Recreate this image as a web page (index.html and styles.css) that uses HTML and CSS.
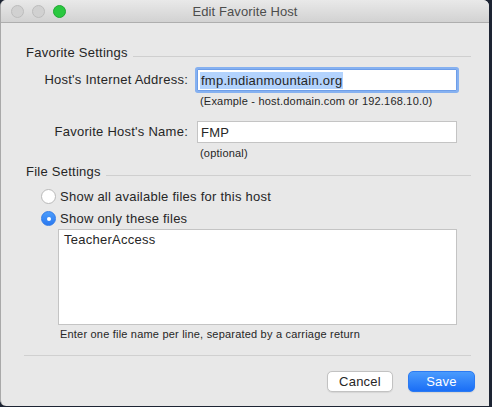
FILE: index.html
```html
<!DOCTYPE html>
<html>
<head>
<meta charset="utf-8">
<link rel="stylesheet" href="styles.css">
</head>
<body>
<div class="window">
  <div class="titlebar">
    <div class="lights">
      <span class="light"></span>
      <span class="light"></span>
      <span class="light green"></span>
    </div>
    <div class="title">Edit Favorite Host</div>
  </div>
  <div class="content">
    <div class="section-head"><span>Favorite Settings</span><i class="rule"></i></div>
    <div class="form">
      <label class="label row1">Host's Internet Address:</label>
      <div class="field focused row1"><span class="sel">fmp.indianmountain.org</span></div>
      <div class="hint hint1">(Example - host.domain.com or 192.168.10.0)</div>
      <label class="label row2">Favorite Host's Name:</label>
      <div class="field row2">FMP</div>
      <div class="hint hint2">(optional)</div>
    </div>
    <div class="section-head fs"><span>File Settings</span><i class="rule"></i></div>
    <div class="radio r1"><span class="dot"></span>Show all available files for this host</div>
    <div class="radio r2"><span class="dot on"></span>Show only these files</div>
    <div class="textarea">TeacherAccess</div>
    <div class="hint hint3">Enter one file name per line, separated by a carriage return</div>
    <div class="sep"></div>
    <div class="buttons">
      <button class="btn">Cancel</button>
      <button class="btn primary">Save</button>
    </div>
  </div>
</div>
</body>
</html>
```

FILE: styles.css
```css
html, body {
  margin: 0;
  padding: 0;
}
body {
  width: 492px;
  height: 407px;
  background: #1d2433;
  font-family: "Liberation Sans", Arial, sans-serif;
  overflow: hidden;
}
.window {
  width: 488px;
  height: 406px;
  background: #e8e8e8;
  border-left: 1px solid #a9a9a9;
  border-radius: 6px 6px 0 6px;
  overflow: hidden;
  color: #262626;
  letter-spacing: 0.25px;
}
.titlebar {
  height: 22px;
  border-bottom: 1px solid #aeaeae;
  background: linear-gradient(#e9e9e9, #d2d2d2);
  display: flex;
  align-items: center;
  position: relative;
}
.lights {
  display: flex;
  gap: 8px;
  padding-left: 10px;
}
.light {
  width: 11px;
  height: 11px;
  border-radius: 50%;
  background: #d1d1d1;
  border: 0.5px solid #bcbcbc;
}
.light.green {
  background: #2ac840;
  border-color: #20a833;
}
.title {
  position: absolute;
  left: 0;
  right: 0;
  top: 0;
  height: 22px;
  line-height: 24px;
  text-align: center;
  font-size: 13px;
  color: #4d4d4d;
  letter-spacing: 0.1px;
}
.content {
  padding: 22px 14px 0 25px;
}
.section-head {
  display: flex;
  align-items: center;
  height: 16px;
  line-height: 16px;
  font-size: 13px;
  color: #262626;
  margin-right: 4px;
}
.section-head .rule {
  flex: 1;
  height: 1px;
  background: #cfcfcf;
  margin-left: 5px;
  margin-top: 7px;
}
.form {
  display: grid;
  grid-template-columns: 162px 259px;
  column-gap: 9px;
  margin-top: 8px;
}
.label {
  grid-column: 1;
  text-align: right;
  font-size: 13px;
  line-height: 22px;
}
.field {
  grid-column: 2;
  height: 20px;
  background: #fff;
  border: 1px solid #c4c4c4;
  font-size: 13px;
  line-height: 21px;
  padding-left: 3px;
  box-sizing: content-box;
  width: 255px;
}
.field.focused {
  border-color: #6e9ee9;
  box-shadow: 0 0 0 2px #86b1f0;
  border-radius: 1px;
  padding-left: 2px;
  width: 256px;
}
.sel {
  background: #b3d3fd;
  display: inline-block;
  line-height: 17px;
  padding: 0 1px;
}
.hint {
  font-size: 11px;
  line-height: 13px;
  color: #262626;
  letter-spacing: 0.2px;
}
.hint1, .hint2 {
  grid-column: 2;
  padding-left: 3px;
  margin-top: 4px;
}
.row2 {
  margin-top: 13px;
}
.fs {
  margin-top: 4px;
}
.radio {
  display: flex;
  align-items: center;
  font-size: 13px;
  margin-left: 15px;
}
.r1 {
  margin-top: 5px;
  height: 23px;
}
.r2 {
  height: 21px;
}
.dot {
  width: 13px;
  height: 13px;
  border-radius: 50%;
  background: #fff;
  border: 1px solid #b9b9b9;
  margin-right: 4px;
  position: relative;
}
.dot.on {
  background: linear-gradient(#4b9cfb, #2a79f0);
  border-color: #2f7ae8;
}
.dot.on::after {
  content: "";
  position: absolute;
  left: 4.5px;
  top: 4.5px;
  width: 4px;
  height: 4px;
  border-radius: 50%;
  background: #fff;
}
.textarea {
  margin-left: 32px;
  background: #fff;
  border: 1px solid #c4c4c4;
  font-size: 13px;
  line-height: 16px;
  padding: 2px 0 0 5px;
  box-sizing: border-box;
  height: 96px;
  width: 399px;
}
.hint3 {
  margin-left: 34px;
  margin-top: 3px;
}
.sep {
  margin: 14px 4px 0 -2px;
  height: 1px;
  background: #d0d0d0;
}
.buttons {
  display: flex;
  justify-content: flex-end;
  gap: 15px;
  margin-top: 15px;
}
.btn {
  font-family: "Liberation Sans", Arial, sans-serif;
  font-size: 13px;
  letter-spacing: 0.25px;
  height: 21px;
  width: 66px;
  border-radius: 5px;
  border: 1px solid #c2c2c2;
  background: #fff;
  color: #262626;
  padding: 0;
  box-shadow: 0 0.5px 1px rgba(0,0,0,0.08);
}
.btn.primary {
  width: 67px;
  color: #fff;
  border-color: #2b7af2;
  background: linear-gradient(#4a9bfd, #1a6ef6);
}
```
